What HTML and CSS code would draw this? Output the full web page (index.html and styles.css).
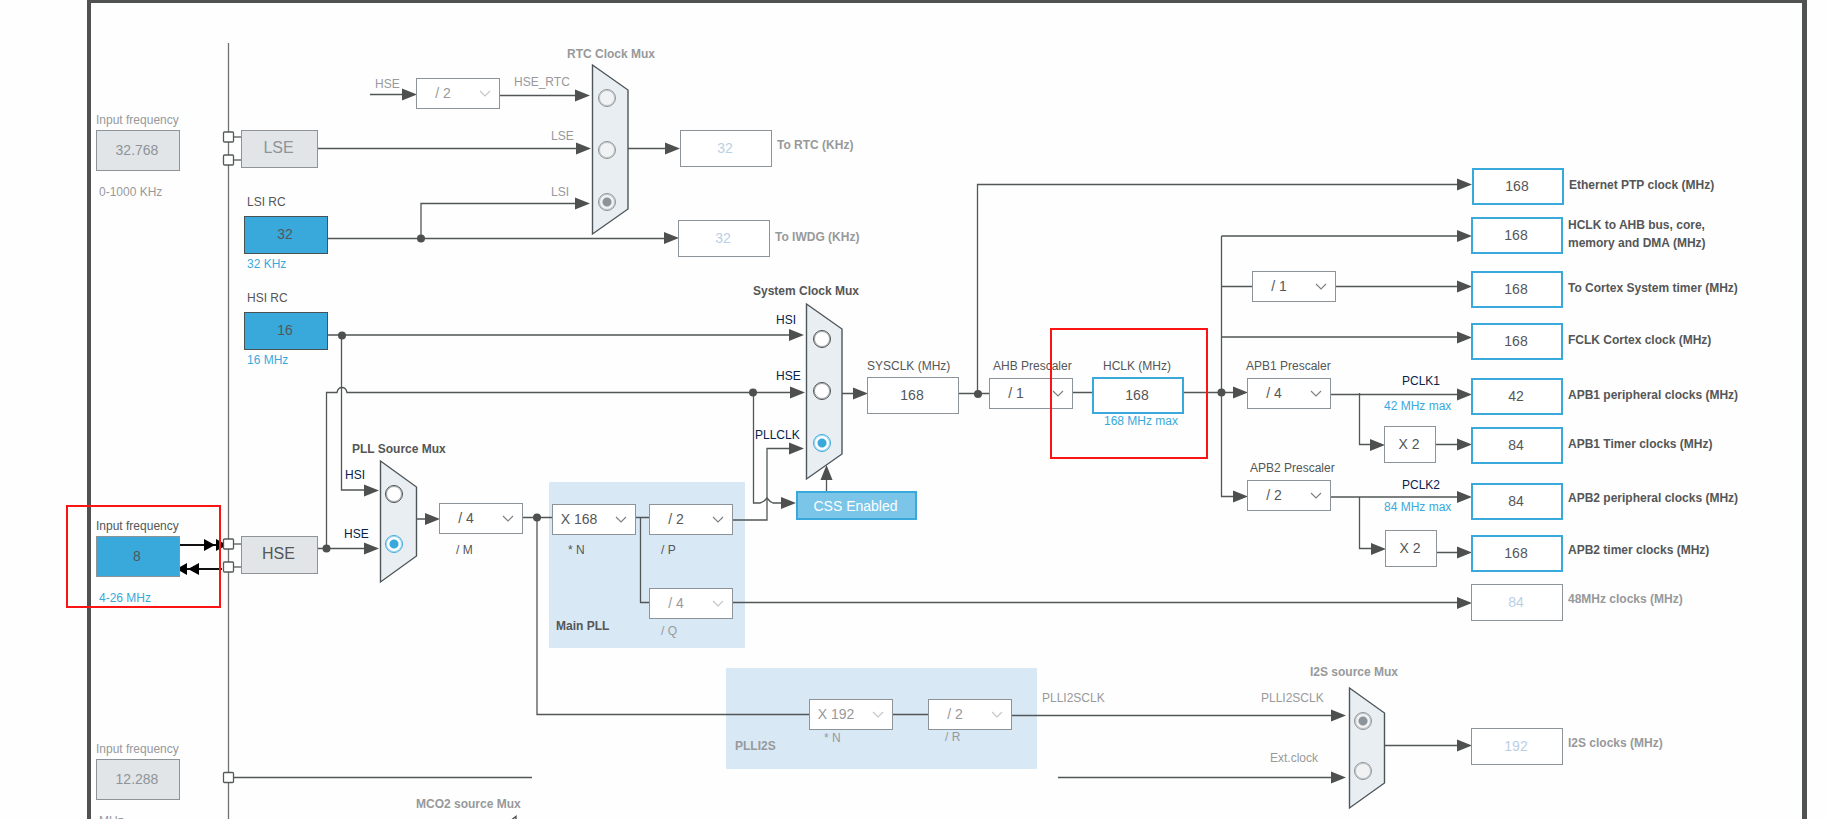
FILE: index.html
```html
<!DOCTYPE html>
<html lang="en">
<head>
<meta charset="utf-8">
<title>Clock Configuration</title>
<link rel="stylesheet" href="styles.css">
</head>
<body>
<main class="viewport">
<div class="board">
  <div class="frame"></div>
  <div class="panel panel-main"></div>
  <div class="panel panel-i2s"></div>

  <svg class="wires" width="1829" height="840" aria-hidden="true">
    <defs>
      <path id="ar" d="M0 0L-15 -6V6Z"/>
      <rect id="pin" x="-5" y="-5" width="10" height="10" rx="1"/>
    </defs>

    <!-- multiplexer bodies -->
    <g class="mux-shape">
      <path d="M592.5 65L628 90V209L592.5 234Z"/>
      <path d="M380.5 461L416.5 487V556L380.5 582Z"/>
      <path d="M806.5 304L842 329V454L806.5 479Z"/>
      <path d="M1349.5 688L1384.5 713V783L1349.5 808Z"/>
      <path d="M516 840V816.500L510 821V840Z"/>
    </g>

    <g class="wire">
      <path d="M228.5 43V840" class="soft"/>
      <path d="M234 137H241M234 160H241M234 544H241M234 567H241" class="soft"/>
      <path d="M370 94.5H405M500 95.5H578M318 148.5H580M628 148.5H668"/>
      <path d="M328 238.5H668M421 238.5V203.5H578"/>
      <path d="M328 335H792M341.5 335V490H367"/>
      <path d="M318 548.5H367M326.5 548.5V392.5H337Q338 387.5 342 387.5T347 392.5H794"/>
      <path d="M753.5 392.5V503H760Q764 502 767 498Q770 502 773 503H785"/>
      <path d="M733 520H767V448.5H792"/>
      <path d="M826.5 491V475"/>
      <path d="M842 393.5H857M959 393.5H989M977.5 393.5V184.5H1460"/>
      <path d="M416 519H429M523 517.5H552M537 517.5V714.5H809M893 714.5H928M1012 715.5H1335"/>
      <path d="M636 517.5H649M640.5 517.5V602.5H649M733 602.5H1460"/>
      <path d="M234 777.5H532M1058 777.5H1335M1385 745.5H1460"/>
      <path d="M1073 392.5H1092M1184 392.5H1236M1221.5 236V496.5H1236"/>
      <path d="M1221.5 236H1460M1221.5 286.5H1252M1336 286.5H1460M1221.5 337H1460"/>
      <path d="M1331 394.5H1460M1359.5 393V444.5H1374M1436 444.5H1460"/>
      <path d="M1331 497H1460M1359.5 497V548.5H1374M1437 552.5H1460"/>
    </g>

    <g class="node">
      <use href="#ar" x="417" y="94.5"/><use href="#ar" x="590" y="95.5"/>
      <use href="#ar" x="591" y="148.5"/><use href="#ar" x="590" y="203.5"/>
      <use href="#ar" x="680" y="148.5"/><use href="#ar" x="679" y="238"/>
      <use href="#ar" x="804" y="335"/><use href="#ar" x="805" y="392.5"/><use href="#ar" x="804" y="448.5"/>
      <use href="#ar" x="379" y="490.5"/><use href="#ar" x="379" y="548.5"/>
      <use href="#ar" x="440" y="519"/><use href="#ar" x="796" y="503"/>
      <use href="#ar" x="868" y="393.5"/>
      <use href="#ar" transform="translate(826.5 465) rotate(-90)"/>
      <use href="#ar" x="1472" y="184.5"/><use href="#ar" x="1472" y="236"/>
      <use href="#ar" x="1472" y="286.5"/><use href="#ar" x="1472" y="337.5"/>
      <use href="#ar" x="1472" y="394.5"/><use href="#ar" x="1472" y="444.5"/>
      <use href="#ar" x="1472" y="497"/><use href="#ar" x="1472" y="552.5"/>
      <use href="#ar" x="1472" y="603"/><use href="#ar" x="1472" y="745.5"/>
      <use href="#ar" x="1248" y="392.5"/><use href="#ar" x="1248" y="496.5"/>
      <use href="#ar" x="1385" y="445"/><use href="#ar" x="1386" y="549"/>
      <use href="#ar" x="1346" y="715.5"/><use href="#ar" x="1346" y="777.5"/>
      <circle cx="421" cy="238.5" r="4"/><circle cx="342" cy="335.5" r="4"/>
      <circle cx="326.5" cy="548.5" r="4"/><circle cx="753" cy="392.5" r="4"/>
      <circle cx="978" cy="394" r="4"/><circle cx="537" cy="517.5" r="4"/>
      <circle cx="1221.5" cy="392.5" r="4"/>
    </g>

    <!-- external oscillator signals -->
    <g class="osc">
      <path d="M180 545H222M180 569H222" class="osc-line"/>
      <path d="M204 539L215 545L204 551ZM216 539L227 545L216 551ZM199 563L188 569L199 575ZM187 563L180 567V571L187 575Z"/>
    </g>
    <g class="pins">
      <use href="#pin" x="228.5" y="137"/><use href="#pin" x="228.5" y="160"/>
      <use href="#pin" x="228.5" y="544"/><use href="#pin" x="228.5" y="567"/>
      <use href="#pin" x="228.5" y="777.5"/>
    </g>
  </svg>

  <!-- input frequencies -->
  <div class="source src-lse off">
    <label for="f-lse">Input frequency</label>
    <input id="f-lse" class="box" value="32.768" disabled>
    <span class="range">0-1000 KHz</span>
  </div>
  <div class="source src-hse">
    <label for="f-hse">Input frequency</label>
    <input id="f-hse" class="box filled" value="8">
    <span class="range">4-26 MHz</span>
  </div>
  <div class="source src-i2s off">
    <label for="f-i2s">Input frequency</label>
    <input id="f-i2s" class="box" value="12.288" disabled>
    <span class="range">MHz</span>
  </div>

  <button class="osc-btn btn-lse" disabled>LSE</button>
  <button class="osc-btn btn-hse">HSE</button>

  <div class="rc rc-lsi">
    <label for="f-lsi">LSI RC</label>
    <input id="f-lsi" class="box filled" value="32" readonly>
    <span class="range">32 KHz</span>
  </div>
  <div class="rc rc-hsi">
    <label for="f-hsi">HSI RC</label>
    <input id="f-hsi" class="box filled" value="16" readonly>
    <span class="range">16 MHz</span>
  </div>

  <!-- multiplexers -->
  <h2 class="title t-rtc off">RTC Clock Mux</h2>
  <div class="mux mux-rtc">
    <input type="radio" name="rtc" id="rtc-hse" disabled>
    <input type="radio" name="rtc" id="rtc-lse" disabled>
    <input type="radio" name="rtc" id="rtc-lsi" checked disabled>
  </div>
  <span class="text l-hse-in off">HSE</span>
  <label class="text l-hsertc off" for="rtc-hse">HSE_RTC</label>
  <label class="text l-lse off" for="rtc-lse">LSE</label>
  <label class="text l-lsi off" for="rtc-lsi">LSI</label>

  <h2 class="title t-pll">PLL Source Mux</h2>
  <div class="mux mux-pll">
    <input type="radio" name="pll" id="pll-hsi">
    <input type="radio" name="pll" id="pll-hse" checked>
  </div>
  <label class="text signal l-pll-hsi" for="pll-hsi">HSI</label>
  <label class="text signal l-pll-hse" for="pll-hse">HSE</label>

  <h2 class="title t-sys">System Clock Mux</h2>
  <div class="mux mux-sys">
    <input type="radio" name="sys" id="sys-hsi">
    <input type="radio" name="sys" id="sys-hse">
    <input type="radio" name="sys" id="sys-pll" checked>
  </div>
  <label class="text signal l-sys-hsi" for="sys-hsi">HSI</label>
  <label class="text signal l-sys-hse" for="sys-hse">HSE</label>
  <label class="text signal l-sys-pll" for="sys-pll">PLLCLK</label>
  <button class="css-btn">CSS Enabled</button>

  <h2 class="title t-i2s off">I2S source Mux</h2>
  <div class="mux mux-i2s">
    <input type="radio" name="i2s" id="i2s-pll" checked disabled>
    <input type="radio" name="i2s" id="i2s-ext" disabled>
  </div>
  <span class="text l-plli2s-out off">PLLI2SCLK</span>
  <label class="text l-plli2s off" for="i2s-pll">PLLI2SCLK</label>
  <label class="text l-ext off" for="i2s-ext">Ext.clock</label>
  <h2 class="title t-mco off">MCO2 source Mux</h2>

  <!-- dividers and multipliers -->
  <div class="pick p-rtc"><select aria-label="HSE RTC divider" disabled><option>/ 2</option></select><svg class="chev" viewBox="0 0 12 8"><path d="M1 1L6 6L11 1"/></svg></div>

  <div class="pick p-m"><select id="s-m"><option>/ 4</option></select><svg class="chev" viewBox="0 0 12 8"><path d="M1 1L6 6L11 1"/></svg></div>
  <label class="text l-m" for="s-m">/ M</label>

  <div class="pick p-n"><select id="s-n"><option>X 168</option></select><svg class="chev" viewBox="0 0 12 8"><path d="M1 1L6 6L11 1"/></svg></div>
  <label class="text l-n" for="s-n">* N</label>

  <div class="pick p-p"><select id="s-p"><option>/ 2</option></select><svg class="chev" viewBox="0 0 12 8"><path d="M1 1L6 6L11 1"/></svg></div>
  <label class="text l-p" for="s-p">/ P</label>

  <div class="pick p-q"><select id="s-q" disabled><option>/ 4</option></select><svg class="chev" viewBox="0 0 12 8"><path d="M1 1L6 6L11 1"/></svg></div>
  <label class="text l-q off" for="s-q">/ Q</label>
  <h2 class="title t-main">Main PLL</h2>

  <div class="pick p-i2sn"><select id="s-i2sn" disabled><option>X 192</option></select><svg class="chev" viewBox="0 0 12 8"><path d="M1 1L6 6L11 1"/></svg></div>
  <label class="text l-i2sn off" for="s-i2sn">* N</label>
  <div class="pick p-i2sr"><select id="s-i2sr" disabled><option>/ 2</option></select><svg class="chev" viewBox="0 0 12 8"><path d="M1 1L6 6L11 1"/></svg></div>
  <label class="text l-i2sr off" for="s-i2sr">/ R</label>
  <h2 class="title t-plli2s off">PLLI2S</h2>

  <label class="text l-sysclk" for="v-sysclk">SYSCLK (MHz)</label>
  <input id="v-sysclk" class="value plain v-sysclk" value="168" readonly>

  <label class="text l-ahb" for="s-ahb">AHB Prescaler</label>
  <div class="pick p-ahb"><select id="s-ahb"><option>/ 1</option></select><svg class="chev" viewBox="0 0 12 8"><path d="M1 1L6 6L11 1"/></svg></div>

  <label class="text l-hclk" for="v-hclk">HCLK (MHz)</label>
  <input id="v-hclk" class="value v-hclk" value="168">
  <span class="text limit l-hclk-max">168 MHz max</span>

  <div class="pick p-cortex"><select aria-label="Cortex timer divider"><option>/ 1</option></select><svg class="chev" viewBox="0 0 12 8"><path d="M1 1L6 6L11 1"/></svg></div>

  <label class="text l-apb1" for="s-apb1">APB1 Prescaler</label>
  <div class="pick p-apb1"><select id="s-apb1"><option>/ 4</option></select><svg class="chev" viewBox="0 0 12 8"><path d="M1 1L6 6L11 1"/></svg></div>
  <span class="text signal l-pclk1">PCLK1</span>
  <span class="text limit l-pclk1-max">42 MHz max</span>
  <div class="mult m-apb1">X 2</div>

  <label class="text l-apb2" for="s-apb2">APB2 Prescaler</label>
  <div class="pick p-apb2"><select id="s-apb2"><option>/ 2</option></select><svg class="chev" viewBox="0 0 12 8"><path d="M1 1L6 6L11 1"/></svg></div>
  <span class="text signal l-pclk2">PCLK2</span>
  <span class="text limit l-pclk2-max">84 MHz max</span>
  <div class="mult m-apb2">X 2</div>

  <!-- outputs -->
  <div class="out raised o-rtc off"><input id="o1" class="value" value="32" disabled><label for="o1">To RTC (KHz)</label></div>
  <div class="out o-iwdg off"><input id="o2" class="value" value="32" disabled><label for="o2">To IWDG (KHz)</label></div>
  <div class="out o-ptp"><input id="o3" class="value" value="168"><label for="o3">Ethernet PTP clock (MHz)</label></div>
  <div class="out o-ahb"><input id="o4" class="value" value="168"><label for="o4" class="two-line">HCLK to AHB bus, core,<br>memory and DMA (MHz)</label></div>
  <div class="out o-cortex"><input id="o5" class="value" value="168"><label for="o5">To Cortex System timer (MHz)</label></div>
  <div class="out o-fclk"><input id="o6" class="value" value="168"><label for="o6">FCLK Cortex clock (MHz)</label></div>
  <div class="out o-apb1p"><input id="o7" class="value" value="42"><label for="o7">APB1 peripheral clocks (MHz)</label></div>
  <div class="out o-apb1t"><input id="o8" class="value" value="84"><label for="o8">APB1 Timer clocks (MHz)</label></div>
  <div class="out raised o-apb2p"><input id="o9" class="value" value="84"><label for="o9">APB2 peripheral clocks (MHz)</label></div>
  <div class="out raised o-apb2t"><input id="o10" class="value" value="168"><label for="o10">APB2 timer clocks (MHz)</label></div>
  <div class="out raised o-48m off"><input id="o11" class="value" value="84" disabled><label for="o11">48MHz clocks (MHz)</label></div>
  <div class="out raised o-i2s off"><input id="o12" class="value" value="192" disabled><label for="o12">I2S clocks (MHz)</label></div>

  <div class="mark mark-input"></div>
  <div class="mark mark-hclk"></div>
</div>
</main>
</body>
</html>
```
FILE: styles.css
```css
:root {
  --ink: #545657;
  --muted: #97999b;
  --line: #8c9499;
  --blue: #39a9dc;
  --navy: #03234b;
  --grey: #e1e5e8;
  --pale: #b9cfe6;
}

* { box-sizing: border-box; }

body {
  margin: 0;
  background: #fefefe;
  color: var(--ink);
  font-family: "Liberation Sans", Arial, sans-serif;
  font-size: 12px;
  line-height: 20px;
}

input, select, button {
  margin: 0;
  padding: 0;
  font-family: inherit;
  font-size: 14px;
  color: var(--ink);
  border-radius: 0;
  opacity: 1;
}

.viewport {
  height: 100vh;
  overflow: auto;
  scrollbar-width: none;
}

.board {
  position: relative;
  min-height: 100%;
  overflow: hidden;
}

.frame {
  position: absolute;
  inset: -1px 22px -10px 87px;
  border: 4px solid #505252;
  border-right-width: 5px;
}

.wires { display: block; position: relative; }
.wire { fill: none; stroke: #525656; stroke-width: 1.3; }
.wire .soft { stroke: #6e7272; }
.node { fill: #4d504f; }
.mux-shape { fill: #e9eef2; stroke: #4f5659; stroke-width: 1.4; }
.osc { fill: #000; }
.osc-line { stroke: #111; stroke-width: 2; }
.pins { fill: #fff; stroke: #54595b; stroke-width: 1.3; }

.panel { position: absolute; background: #d9e8f5; border-radius: 1px; }
.panel-main { left: 549px; top: 482px; width: 196px; height: 166px; }
.panel-i2s { left: 726px; top: 668px; width: 311px; height: 101px; }

.off { color: var(--muted); }

/* frequency sources */
.source, .rc {
  position: absolute;
  display: flex;
  flex-direction: column;
  width: 84px;
}
.source label, .rc label { white-space: nowrap; }
.source .box { height: 41px; }
.source .range { margin-top: 11px; padding-left: 3px; }
.range { color: var(--blue); white-space: nowrap; }
.off .range { color: var(--muted); }
.src-lse { left: 96px; top: 110px; }
.src-hse { left: 96px; top: 516px; }
.src-i2s { left: 96px; top: 739px; }

.box {
  width: 100%;
  padding: 0 2px 2px 0;
  text-align: center;
  background: var(--grey);
  border: 1px solid var(--line);
}
.box:disabled { color: #8e9498; }
.box.filled { background: var(--blue); }

.rc label { padding-left: 3px; margin-bottom: 4px; }
.rc .box { height: 38px; border-color: #4a5154; }
.rc .range { padding-left: 3px; }
.rc-lsi { left: 244px; top: 192px; }
.rc-hsi { left: 244px; top: 288px; }

.osc-btn {
  position: absolute;
  left: 241px;
  width: 77px;
  height: 38px;
  padding: 0 2px 2px 0;
  font-size: 16px;
  background: var(--grey);
  border: 1px solid var(--line);
}
.osc-btn:disabled { color: #8e9498; }
.btn-lse { top: 130px; }
.btn-hse { top: 536px; }

.css-btn {
  position: absolute;
  left: 796px;
  top: 491px;
  width: 121px;
  height: 29px;
  padding-right: 2px;
  color: #fff;
  background: #7bc5e9;
  border: 2px solid var(--blue);
}

/* multiplexer inputs */
.mux { position: absolute; display: flex; flex-direction: column; gap: 34px; }
.mux-rtc { left: 598px; top: 89px; }
.mux-sys { left: 813px; top: 330px; }
.mux-pll { left: 385px; top: 485px; gap: 32px; }
.mux-i2s { left: 1354px; top: 712px; gap: 32px; }

.mux input {
  appearance: none;
  width: 18px;
  height: 18px;
  border: 1px solid #4a4f52;
  outline: 1px solid #4a4f5277;
  outline-offset: -2px;
  border-radius: 50%;
  background: #fff;
}
.mux input:checked {
  border-color: var(--blue);
  outline-color: #39a9dc77;
  background: radial-gradient(circle, var(--blue) 4px, #fff 5px);
}
.mux input:disabled {
  border-color: var(--line);
  outline-color: #8c949977;
  background: #f1f2f3;
}
.mux input:disabled:checked {
  background: radial-gradient(circle, var(--line) 4px, #f1f2f3 5px);
}

/* free labels */
.text, .title { position: absolute; white-space: nowrap; }
.title { margin: 0; font-size: 12px; font-weight: bold; }
.signal { color: var(--navy); }
.limit { color: var(--blue); }

.t-rtc { left: 567px; top: 44px; }
.t-pll { left: 352px; top: 439px; }
.t-sys { left: 753px; top: 281px; }
.t-i2s { left: 1310px; top: 662px; }
.t-mco { left: 416px; top: 794px; }
.t-main { left: 556px; top: 616px; }
.t-plli2s { left: 735px; top: 736px; }

.l-hse-in { left: 375px; top: 74px; }
.l-hsertc { left: 514px; top: 72px; }
.l-lse { left: 551px; top: 126px; }
.l-lsi { left: 551px; top: 182px; }
.l-pll-hsi { left: 345px; top: 465px; }
.l-pll-hse { left: 344px; top: 524px; }
.l-sys-hsi { left: 776px; top: 310px; }
.l-sys-hse { left: 776px; top: 366px; }
.l-sys-pll { left: 755px; top: 425px; }
.l-plli2s-out { left: 1042px; top: 688px; }
.l-plli2s { left: 1261px; top: 688px; }
.l-ext { left: 1270px; top: 748px; }
.l-m { left: 456px; top: 540px; }
.l-n { left: 568px; top: 540px; }
.l-p { left: 661px; top: 540px; }
.l-q { left: 661px; top: 621px; }
.l-i2sn { left: 824px; top: 728px; }
.l-i2sr { left: 945px; top: 727px; }
.l-sysclk { left: 867px; top: 356px; }
.l-ahb { left: 993px; top: 356px; }
.l-hclk { left: 1103px; top: 356px; }
.l-hclk-max { left: 1104px; top: 411px; }
.l-apb1 { left: 1246px; top: 356px; }
.l-apb2 { left: 1250px; top: 458px; }
.l-pclk1 { left: 1402px; top: 371px; }
.l-pclk1-max { left: 1384px; top: 396px; }
.l-pclk2 { left: 1402px; top: 475px; }
.l-pclk2-max { left: 1384px; top: 497px; }

/* drop-downs */
.pick { position: absolute; width: 84px; height: 31px; }
.pick select {
  appearance: none;
  width: 100%;
  height: 100%;
  padding: 0 30px 1px 0;
  text-align: center;
  text-align-last: center;
  background: #fff;
  border: 1px solid var(--line);
}
.pick select:disabled { color: var(--muted); }
.chev {
  position: absolute;
  right: 9px;
  top: 12px;
  width: 12px;
  height: 8px;
  fill: none;
  stroke: #7a7e81;
  stroke-width: 1.1;
  pointer-events: none;
}
.pick select:disabled + .chev { stroke: #c3c6c8; }

.p-rtc { left: 416px; top: 78px; }
.p-m { left: 439px; top: 503px; }
.p-n { left: 552px; top: 504px; }
.p-p { left: 649px; top: 504px; }
.p-q { left: 649px; top: 588px; }
.p-i2sn { left: 809px; top: 699px; }
.p-i2sr { left: 928px; top: 699px; }
.p-ahb { left: 989px; top: 378px; }
.p-cortex { left: 1252px; top: 271px; }
.p-apb1 { left: 1247px; top: 378px; }
.p-apb2 { left: 1247px; top: 480px; }

.mult {
  position: absolute;
  width: 52px;
  height: 37px;
  padding-right: 2px;
  font-size: 14px;
  line-height: 35px;
  text-align: center;
  background: #fff;
  border: 1px solid var(--line);
}
.m-apb1 { left: 1384px; top: 426px; }
.m-apb2 { left: 1385px; top: 530px; }

/* frequency values */
.value {
  width: 92px;
  height: 37px;
  padding: 0 2px 1px 0;
  text-align: center;
  background: #fff;
  border: 2px solid var(--blue);
}
.value.plain { border: 1px solid var(--line); }
.value:disabled { border: 1px solid var(--line); color: var(--pale); }
.v-sysclk, .v-hclk { position: absolute; top: 377px; }
.v-sysclk { left: 867px; }
.v-hclk { left: 1092px; }

.out {
  position: absolute;
  left: 1471px;
  display: flex;
  align-items: center;
  gap: 5px;
  font-weight: bold;
  white-space: nowrap;
}
.out label { padding-bottom: 4px; }
.out.raised label { padding-bottom: 7px; }
.out .two-line { line-height: 18px; padding-bottom: 2px; }
.o-rtc { left: 680px; top: 130px; }
.o-iwdg { left: 678px; top: 220px; }
.o-ptp { left: 1472px; top: 168px; }
.o-ahb { top: 216px; }
.o-cortex { top: 271px; }
.o-fclk { top: 323px; }
.o-apb1p { top: 378px; }
.o-apb1t { top: 427px; }
.o-apb2p { top: 483px; }
.o-apb2t { top: 535px; }
.o-48m { top: 584px; }
.o-i2s { top: 728px; }

/* highlight marks */
.mark { position: absolute; border: 2px solid #fb1414; pointer-events: none; }
.mark-input { left: 66px; top: 505px; width: 155px; height: 103px; }
.mark-hclk { left: 1050px; top: 328px; width: 158px; height: 131px; }
```
